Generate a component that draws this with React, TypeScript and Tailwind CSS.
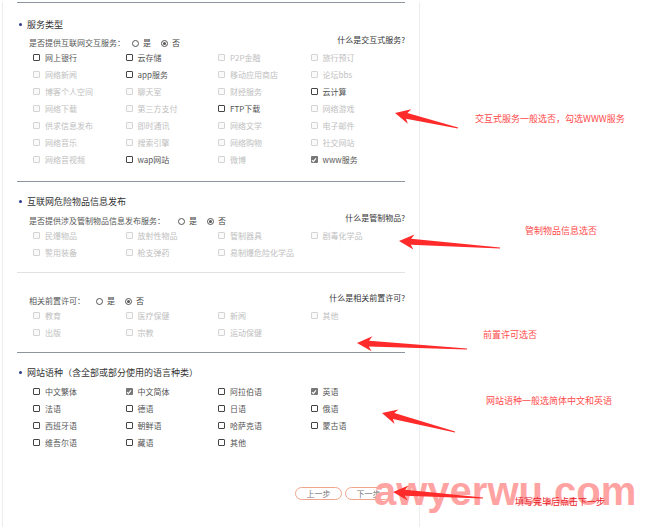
import React from "react";

type Item = { label: string; enabled?: boolean; checked?: boolean };

const FONT = { fontFamily: '"Noto Sans CJK SC", "Liberation Sans", sans-serif' };

function Box({ item }: { item: Item }) {
  const on = item.enabled;
  return (
    <div className="flex h-[17px] items-center gap-[5px]">
      {item.checked ? (
        <span className="flex h-[7px] w-[7px] items-center justify-center rounded-[1px] bg-[#777]">
          <svg width="6" height="6" viewBox="0 0 6 6">
            <path d="M1 3.2 L2.4 4.6 L5 1.4" stroke="#fff" strokeWidth="1.1" fill="none" />
          </svg>
        </span>
      ) : (
        <span
          className={
            on
              ? "h-[7px] w-[7px] rounded-[1px] border border-[#444] bg-white"
              : "h-[7px] w-[7px] rounded-[1px] border border-[#d4d4d4] bg-[#fafafa]"
          }
        />
      )}
      <span className={on ? "text-[8px] leading-none text-[#555]" : "text-[8px] leading-none text-[#c0c0c0]"}>
        {item.label}
      </span>
    </div>
  );
}

function Grid({ items }: { items: Item[] }) {
  return (
    <div className="ml-[16px] grid w-[370px] grid-cols-4">
      {items.map((it, i) => (
        <Box key={i} item={it} />
      ))}
    </div>
  );
}

function Radio({ checked, label }: { checked?: boolean; label: string }) {
  return (
    <span className="flex items-center gap-[4px]">
      <span className="flex h-[7px] w-[7px] items-center justify-center rounded-full border border-[#555] bg-white">
        {checked && <span className="h-[3px] w-[3px] rounded-full bg-[#555]" />}
      </span>
      <span className="text-[8px] leading-none text-[#444]">{label}</span>
    </span>
  );
}

function Question({ q, help, gapLeft }: { q: string; help: string; gapLeft: string }) {
  return (
    <div className="flex h-[12px] items-center justify-between">
      <div className="ml-[12px] flex items-center">
        <span className="text-[8px] leading-none text-[#555]">{q}</span>
        <div className={`${gapLeft} flex items-center gap-[10px]`}>
          <Radio label="是" />
          <Radio label="否" checked />
        </div>
      </div>
      <span className="mb-[7px] text-[8px] leading-none text-[#333]">{help}</span>
    </div>
  );
}

function Title({ text }: { text: string }) {
  return (
    <div className="flex h-[17px] items-center">
      <span className="ml-[2px] h-[3px] w-[3px] rounded-full bg-[#2c3a8f]" />
      <span className="ml-[5px] text-[9px] leading-none text-[#333]">{text}</span>
    </div>
  );
}

const E = (label: string): Item => ({ label, enabled: true });
const D = (label: string): Item => ({ label });

const sec1: Item[] = [
  E("网上银行"), E("云存储"), D("P2P金融"), D("旅行预订"),
  D("网络新闻"), E("app服务"), D("移动应用商店"), D("论坛bbs"),
  D("博客个人空间"), D("聊天室"), D("财经服务"), E("云计算"),
  D("网络下载"), D("第三方支付"), E("FTP下载"), D("网络游戏"),
  D("供求信息发布"), D("即时通讯"), D("网络文学"), D("电子邮件"),
  D("网络音乐"), D("搜索引擎"), D("网络购物"), D("社交网站"),
  D("网络音视频"), E("wap网站"), D("微博"), { label: "www服务", enabled: true, checked: true },
];

const sec2: Item[] = [
  D("民爆物品"), D("放射性物品"), D("管制器具"), D("剧毒化学品"),
  D("警用装备"), D("枪支弹药"), D("易制爆危险化学品"),
];

const sec3: Item[] = [
  D("教育"), D("医疗保健"), D("新闻"), D("其他"),
  D("出版"), D("宗教"), D("运动保健"),
];

const sec4: Item[] = [
  E("中文繁体"), { label: "中文简体", enabled: true, checked: true }, E("阿拉伯语"), { label: "英语", enabled: true, checked: true },
  E("法语"), E("德语"), E("日语"), E("俄语"),
  E("西班牙语"), E("朝鲜语"), E("哈萨克语"), E("蒙古语"),
  E("维吾尔语"), E("藏语"), E("其他"),
];

function arrow(tip: [number, number], tail: [number, number]) {
  const [tx, ty] = tip;
  const [sx, sy] = tail;
  const dx = sx - tx;
  const dy = sy - ty;
  const len = Math.hypot(dx, dy);
  const ux = dx / len;
  const uy = dy / len;
  const nx = -uy;
  const ny = ux;
  const headLen = 15;
  const headW = 7.5;
  const neckW = 3;
  const hx = tx + ux * headLen;
  const hy = ty + uy * headLen;
  const bx = tx + ux * (headLen - 3);
  const by = ty + uy * (headLen - 3);
  const pts = [
    [tx, ty],
    [hx + nx * headW, hy + ny * headW],
    [bx + nx * neckW, by + ny * neckW],
    [sx + nx * 0.4, sy + ny * 0.4],
    [sx - nx * 0.4, sy - ny * 0.4],
    [bx - nx * neckW, by - ny * neckW],
    [hx - nx * headW, hy - ny * headW],
  ];
  return pts.map((p) => `${p[0].toFixed(1)},${p[1].toFixed(1)}`).join(" ");
}

export default function App() {
  return (
    <div className="relative h-[527px] w-[651px] overflow-hidden bg-white" style={FONT}>
      <div className="ml-[2px] h-full w-[418px] border-l border-r border-[#ececec] px-[14px]">
        <div className="mt-[2px] border-t border-[#8c949e]" />

        <div className="pt-[13px] pb-[13px]">
          <Title text="服务类型" />
          <div className="mt-[4px]">
            <Question q="是否提供互联网交互服务：" help="什么是交互式服务?" gapLeft="ml-[7px]" />
          </div>
          <Grid items={sec1} />
        </div>
        <div className="border-t border-[#8c949e]" />

        <div className="pt-[11px] pb-[11px]">
          <Title text="互联网危险物品信息发布" />
          <div className="mt-[5px]">
            <Question q="是否提供涉及管制物品信息发布服务：" help="什么是管制物品?" gapLeft="ml-[13px]" />
          </div>
          <Grid items={sec2} />
        </div>
        <div className="border-t border-[#e2e2e2]" />

        <div className="pt-[22px] pb-[11px]">
          <Question q="相关前置许可：" help="什么是相关前置许可?" gapLeft="ml-[11px]" />
          <Grid items={sec3} />
        </div>
        <div className="border-t border-[#8c949e]" />

        <div className="pt-[11px]">
          <Title text="网站语种（含全部或部分使用的语言种类）" />
          <div className="mt-[2px]">
            <Grid items={sec4} />
          </div>
        </div>

        <div className="mt-[36px] flex justify-end gap-[3px] pr-[13px]">
          <button className="flex h-[13px] w-[47px] items-center justify-center rounded-full border border-[#eea68c] bg-white text-[8px] leading-none text-[#777]">
            上一步
          </button>
          <button className="flex h-[13px] w-[47px] items-center justify-center rounded-full border border-[#eea68c] bg-white text-[8px] leading-none text-[#777]">
            下一步
          </button>
        </div>
      </div>

      {/* annotations */}
      <div className="absolute left-[475px] top-[114px] text-[9px] leading-none text-[#ff4b4b]">交互式服务一般选否，勾选WWW服务</div>
      <div className="absolute left-[525px] top-[226px] text-[9px] leading-none text-[#ff4b4b]">管制物品信息选否</div>
      <div className="absolute left-[483px] top-[330px] text-[9px] leading-none text-[#ff4b4b]">前置许可选否</div>
      <div className="absolute left-[486px] top-[396px] text-[9px] leading-none text-[#ff4b4b]">网站语种一般选简体中文和英语</div>

      <div
        className="absolute left-[374px] top-[471px] text-[40px] font-bold leading-none text-red-300"
        style={{ fontFamily: '"Liberation Sans", sans-serif' }}
      >
        awyerwu.com
      </div>
      <div className="absolute left-[515px] top-[497px] text-[9px] leading-none text-[#e8222a]">填写完毕后点击下一步</div>

      <svg className="pointer-events-none absolute left-0 top-0" width="651" height="527">
        <polygon points={arrow([395, 113], [458, 128])} fill="#ff2b2b" />
        <polygon points={arrow([399, 241], [500, 248])} fill="#ff2b2b" />
        <polygon points={arrow([357, 343], [467, 349])} fill="#ff2b2b" />
        <polygon points={arrow([382, 413], [455, 432])} fill="#ff2b2b" />
        <polygon points={arrow([393, 492], [483, 498])} fill="#ff2b2b" />
      </svg>
    </div>
  );
}
